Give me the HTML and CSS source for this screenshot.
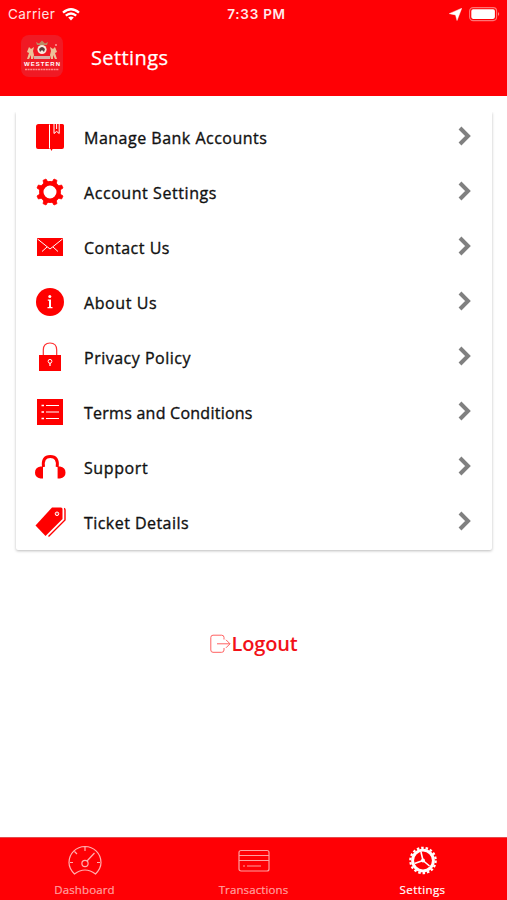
FILE: index.html
```html
<!DOCTYPE html>
<html lang="en">
<head>
<meta charset="utf-8">
<title>Settings</title>
<link rel="stylesheet" href="styles.css">
</head>
<body>
<div class="app">
  <header class="header">
    <div class="status">
      <div class="carrier"><span class="carrier-name">Carrier</span>
        <svg class="wifi" width="18" height="13" viewBox="0 0 18 13" fill="none" stroke="#fff" stroke-width="2.3"><path d="M1 4.7Q9-2.2 17 4.7M3.8 7.7Q9 3.2 14.2 7.7"/><path d="M9 12.5L6.2 9.6Q9 7.4 11.8 9.6Z" fill="#fff" stroke="none"/></svg>
      </div>
      <div class="clock">7:33 PM</div>
      <div class="indicators">
        <svg width="13" height="13" viewBox="0 0 12 12" fill="#fff"><path d="M11.8.2L7.4 11.6L6 6.4L.2 5.200Z" stroke="#fff" stroke-width=".4"/></svg>
        <svg width="31" height="15" viewBox="0 0 31 15"><rect x=".6" y=".6" width="27" height="13" rx="3.5" fill="none" stroke="#ff7474" stroke-width="1.1"/><rect x="2.3" y="2.3" width="23.6" height="9.6" rx="1.8" fill="#fff"/><path d="M29 5Q31.4 7 29 9Z" fill="#ff8585"/></svg>
      </div>
    </div>
    <div class="titlebar">
      <svg class="logo" width="42" height="42" viewBox="0 0 42 42">
        <rect width="42" height="42" rx="8" fill="#f01a24"/>
        <path d="M16 10L15 7L18 8.500L21 5.500L24 8.500L27 7L26 10Z" fill="#b98b65"/>
        <circle cx="21" cy="14.500" r="4.600" fill="#f8e9dd"/><path d="M18 14Q21 10 24 14L23 17L21 15L19 17Z" fill="#593d3b"/>
        <path d="M8 12L10 14L13 12L12 16L13 20L12 24H10L10 20L8 24H6L8 18L6 17Z M34 12L32 14L29 12L30 16L29 20L30 24H32L32 20L34 24H36L34 18L36 17Z" fill="#ecc198"/>
        <path d="M13 21H29V24H13Z" fill="#d8afa7"/><circle cx="35" cy="10" r="1" fill="#f99"/>
        <text class="logo-name" x="3" y="31" textLength="36" lengthAdjust="spacing">WESTERN</text>
        <path d="M4 34.500H38" stroke="#ff8a8a" stroke-width="1.400" stroke-dasharray="2 .6"/>
      </svg>
      <h1 class="title">Settings</h1>
    </div>
  </header>

  <main class="content">
    <ul class="card">
      <li class="row"><svg class="icon" viewBox="0 0 32 32"><path d="M4.500 3H28.500Q30 3 30 4.500V26Q30 28 28 28H18.500L17.500 30L16.500 28H4Q2 28 2 26V5.500Q2 3 4.500 3Z" fill="red"/><path d="M15.500 3.500V27.500M20 3V12.500L22.600 10.400L25.200 12.500V3M22.600 3V8" fill="none" stroke="#fff" stroke-width="1"/></svg><span class="label l1">Manage Bank Accounts</span><svg class="chevron" viewBox="0 0 14 20"><path d="M2 2L10 10L2 18"/></svg></li>
      <li class="row"><svg class="icon" viewBox="0 0 32 32"><circle cx="16" cy="16" r="8.700" fill="none" stroke="red" stroke-width="4.400"/><path d="M18.200 6L20 3L23 4.400L22 8ZM24 10L27.600 9L29 12L26 14ZM26 18L29 20L27.600 23L24 22ZM22 24L23 27.600L20 29L18.200 26ZM13.800 26L12 29L9 27.600L10 24ZM8 22L4.400 23L3 20L6 18ZM6 14L3 12L4.400 9L8 10ZM10 8L9 4.400L12 3L13.800 6Z" fill="red" stroke="red" stroke-width=".8" stroke-linejoin="round"/></svg><span class="label l2">Account Settings</span><svg class="chevron" viewBox="0 0 14 20"><path d="M2 2L10 10L2 18"/></svg></li>
      <li class="row"><svg class="icon" viewBox="0 0 32 32"><path d="M3 7H29V25H3Z" fill="red"/><path d="M3.500 8L16 18L28.500 8M8 20.500L13 16M24 20.500L19 16" fill="none" stroke="#fff" stroke-width="1"/></svg><span class="label l3">Contact Us</span><svg class="chevron" viewBox="0 0 14 20"><path d="M2 2L10 10L2 18"/></svg></li>
      <li class="row"><svg class="icon" viewBox="0 0 32 32"><circle cx="16" cy="16" r="14" fill="red"/><circle cx="15.800" cy="10.600" r="1.500" fill="#fff"/><path d="M13.800 13.500H17V21H18.500V22.200H13.500V21H15V14.700H13.800Z" fill="#fff"/></svg><span class="label l4">About Us</span><svg class="chevron" viewBox="0 0 14 20"><path d="M2 2L10 10L2 18"/></svg></li>
      <li class="row"><svg class="icon" viewBox="0 0 32 32"><path d="M5 14H27V30H5Z" fill="red"/><path d="M9.300 14V9Q9.300 2 16 2T22.700 9V14" fill="none" stroke="#ff3030" stroke-width="1.200"/><circle cx="16" cy="20.300" r="1.900" fill="red" stroke="#fff"/><path d="M16 22V25" stroke="#fff" stroke-width="1.300"/></svg><span class="label l5">Privacy Policy</span><svg class="chevron" viewBox="0 0 14 20"><path d="M2 2L10 10L2 18"/></svg></li>
      <li class="row"><svg class="icon" viewBox="0 0 32 32"><path d="M3 3H29V29H3Z" fill="red"/><path d="M7.500 9.500H10M7.500 16H10M7.500 22.500H10" stroke="#fff" stroke-width="1.700"/><path d="M12 9.500H25M12 16H25M12 22.500H25" stroke="#fff" stroke-width="1"/></svg><span class="label l6">Terms and Conditions</span><svg class="chevron" viewBox="0 0 14 20"><path d="M2 2L10 10L2 18"/></svg></li>
      <li class="row"><svg class="icon" viewBox="0 0 32 32"><path d="M9.500 16Q8 5.500 16.300 5.500T23.200 16" fill="none" stroke="red" stroke-width="3"/><path d="M9 15.500V27.500H6.500Q1 26.500 1 21.700Q1 16.500 6.500 15.500ZM23.600 15.500V27.500H26Q31.500 26.500 31.500 21.700Q31.500 16.500 26 15.500Z" fill="red"/></svg><span class="label l7">Support</span><svg class="chevron" viewBox="0 0 14 20"><path d="M2 2L10 10L2 18"/></svg></li>
      <li class="row"><svg class="icon" viewBox="0 0 32 32"><path d="M1.500 19.500L18 1.500H27Q28.500 1.500 28.500 3V13L11.500 30Z" fill="red"/><path d="M30 2.500Q31 2.600 31 4V14L14.500 30.500" fill="none" stroke="red" stroke-width="1.400"/><circle cx="23" cy="7.800" r="1.800" fill="#ff3838" stroke="#fff"/></svg><span class="label l8">Ticket Details</span><svg class="chevron" viewBox="0 0 14 20"><path d="M2 2L10 10L2 18"/></svg></li>
    </ul>
    <div class="logout">
      <svg width="21" height="20" viewBox="0 0 21 20" fill="none" stroke="#ff6161" stroke-width="1"><path d="M14 5.500V3.500Q14 1.200 11.700 1.200H3Q.8 1.200 .8 3.500V16Q.8 18.300 3 18.300H11.700Q14 18.300 14 16V14M7 9.800H20M16 5.800L20 9.800L16 13.800"/></svg><span class="logout-text">Logout</span>
    </div>
  </main>

  <nav class="nav">
    <div class="tab">
      <svg width="34" height="32" viewBox="0 0 34 32" fill="none" stroke="#ffb0b0" stroke-width="1.200"><path d="M6.500 29Q1 23.500 1 17.500A16 16 0 0 1 33 17.500Q33 23.500 27.500 29Q17 21 6.500 29ZM17 2V6M6.500 6.500L9 9M2 17.500H5M29 17.500H32M19 16L26.500 8"/><circle cx="17" cy="18.500" r="3.100"/></svg>
      <span class="tab-label t1">Dashboard</span>
    </div>
    <div class="tab">
      <svg width="34" height="32" viewBox="0 0 34 32" fill="none" stroke="#ffa0a0" stroke-width="1.200"><rect x="2" y="5.500" width="30" height="20.500" rx="2"/><path d="M2 10.500H32M2 15.500H32M6 21H8M10 21H24"/></svg>
      <span class="tab-label t2">Transactions</span>
    </div>
    <div class="tab active">
      <svg width="34" height="32" viewBox="0 0 34 32" fill="none" stroke="#fff"><circle cx="17" cy="15.500" r="12.700" stroke-width="2.200" stroke-dasharray="2.500 1.933"/><circle cx="17" cy="15.500" r="10.400" stroke-width="2.900"/><circle cx="17" cy="15.500" r="2" fill="#fff" stroke="none"/><path d="M17 15.500L15 7M17 15.500L8.500 18.500M17 15.500L23.500 21" stroke-width="1.600"/></svg>
      <span class="tab-label t3">Settings</span>
    </div>
  </nav>
</div>
</body>
</html>
```
FILE: styles.css
```css
* { box-sizing: border-box; }
body { margin: 0; background: #fff; font-family: "Open Sans", sans-serif; }
.app { height: 900px; display: flex; flex-direction: column; overflow: hidden; }
.header { height: 96px; background: #ff0005; color: #fff; flex: none; }
.status { height: 28px; display: grid; grid-template-columns: 1fr auto 1fr; align-items: center; padding: 0 7px 0 8px; font-family: Inter, sans-serif; }
.carrier { display: flex; align-items: center; gap: 7px; }
.carrier-name { font-size: 13.5px; letter-spacing: .45px; color: #ffe1e1; }
.clock { font-size: 13.5px; font-weight: 600; letter-spacing: .75px; color: #ffeaea; padding-left: 5px; }
.indicators { display: flex; justify-content: flex-end; align-items: center; gap: 7px; }
.titlebar { display: flex; align-items: center; height: 58px; padding-left: 21px; gap: 28px; }
.logo { margin-top: -2px; }
.logo-name { font: 700 6px "Liberation Sans", sans-serif; fill: #fff; }
.title { margin: 2px 0 0; font-size: 20px; line-height: 28px; font-weight: 500; letter-spacing: .4px; -webkit-text-stroke: .25px #fff; }
.content { flex: 1; padding: 16px 15px 0 16px; }
.card { margin: 0; padding: 0; list-style: none; height: 438px; box-shadow: 0 1px 3px #bbb; border-radius: 0 0 2px 2px; clip-path: inset(0 -4px -4px -4px); }
.row { height: 55px; display: flex; align-items: center; padding: 0 20px 0 18px; position: relative; top: -2px; }
.icon { width: 32px; height: 32px; flex: none; position: relative; left: -.5px; top: -.5px; }
.label { margin-left: 18px; flex: 1; font-size: 16px; font-weight: 500; line-height: 24px; color: #111; white-space: nowrap; -webkit-text-stroke: .35px #111; }
.l1 { letter-spacing: .5px; }
.l2 { letter-spacing: .57px; }
.l3 { letter-spacing: .5px; }
.l4 { letter-spacing: .58px; }
.l5 { letter-spacing: .5px; }
.l6 { letter-spacing: .25px; }
.l7 { letter-spacing: .6px; }
.l8 { letter-spacing: .45px; }
.chevron { width: 14px; height: 20px; margin-top: -3px; fill: none; stroke: #808080; stroke-width: 4; }
.logout { margin-top: 80px; display: flex; justify-content: center; align-items: center; height: 28px; color: #f21118; }
.logout-text { font-size: 20px; font-weight: 600; line-height: 28px; letter-spacing: -.15px; }
.nav { height: 63px; flex: none; display: grid; grid-template-columns: repeat(3, 1fr); background: #ff0005; border-top: 1px solid #e34b4e; }
.tab { display: flex; flex-direction: column; align-items: center; padding-top: 7px; color: #ffa0a0; }
.tab-label { font-size: 11.5px; line-height: 16px; margin-top: 5px; font-weight: 500; letter-spacing: .12px; -webkit-text-stroke: .2px currentColor; }
.t3 { letter-spacing: .4px; }
.active { color: #fff; }
```
